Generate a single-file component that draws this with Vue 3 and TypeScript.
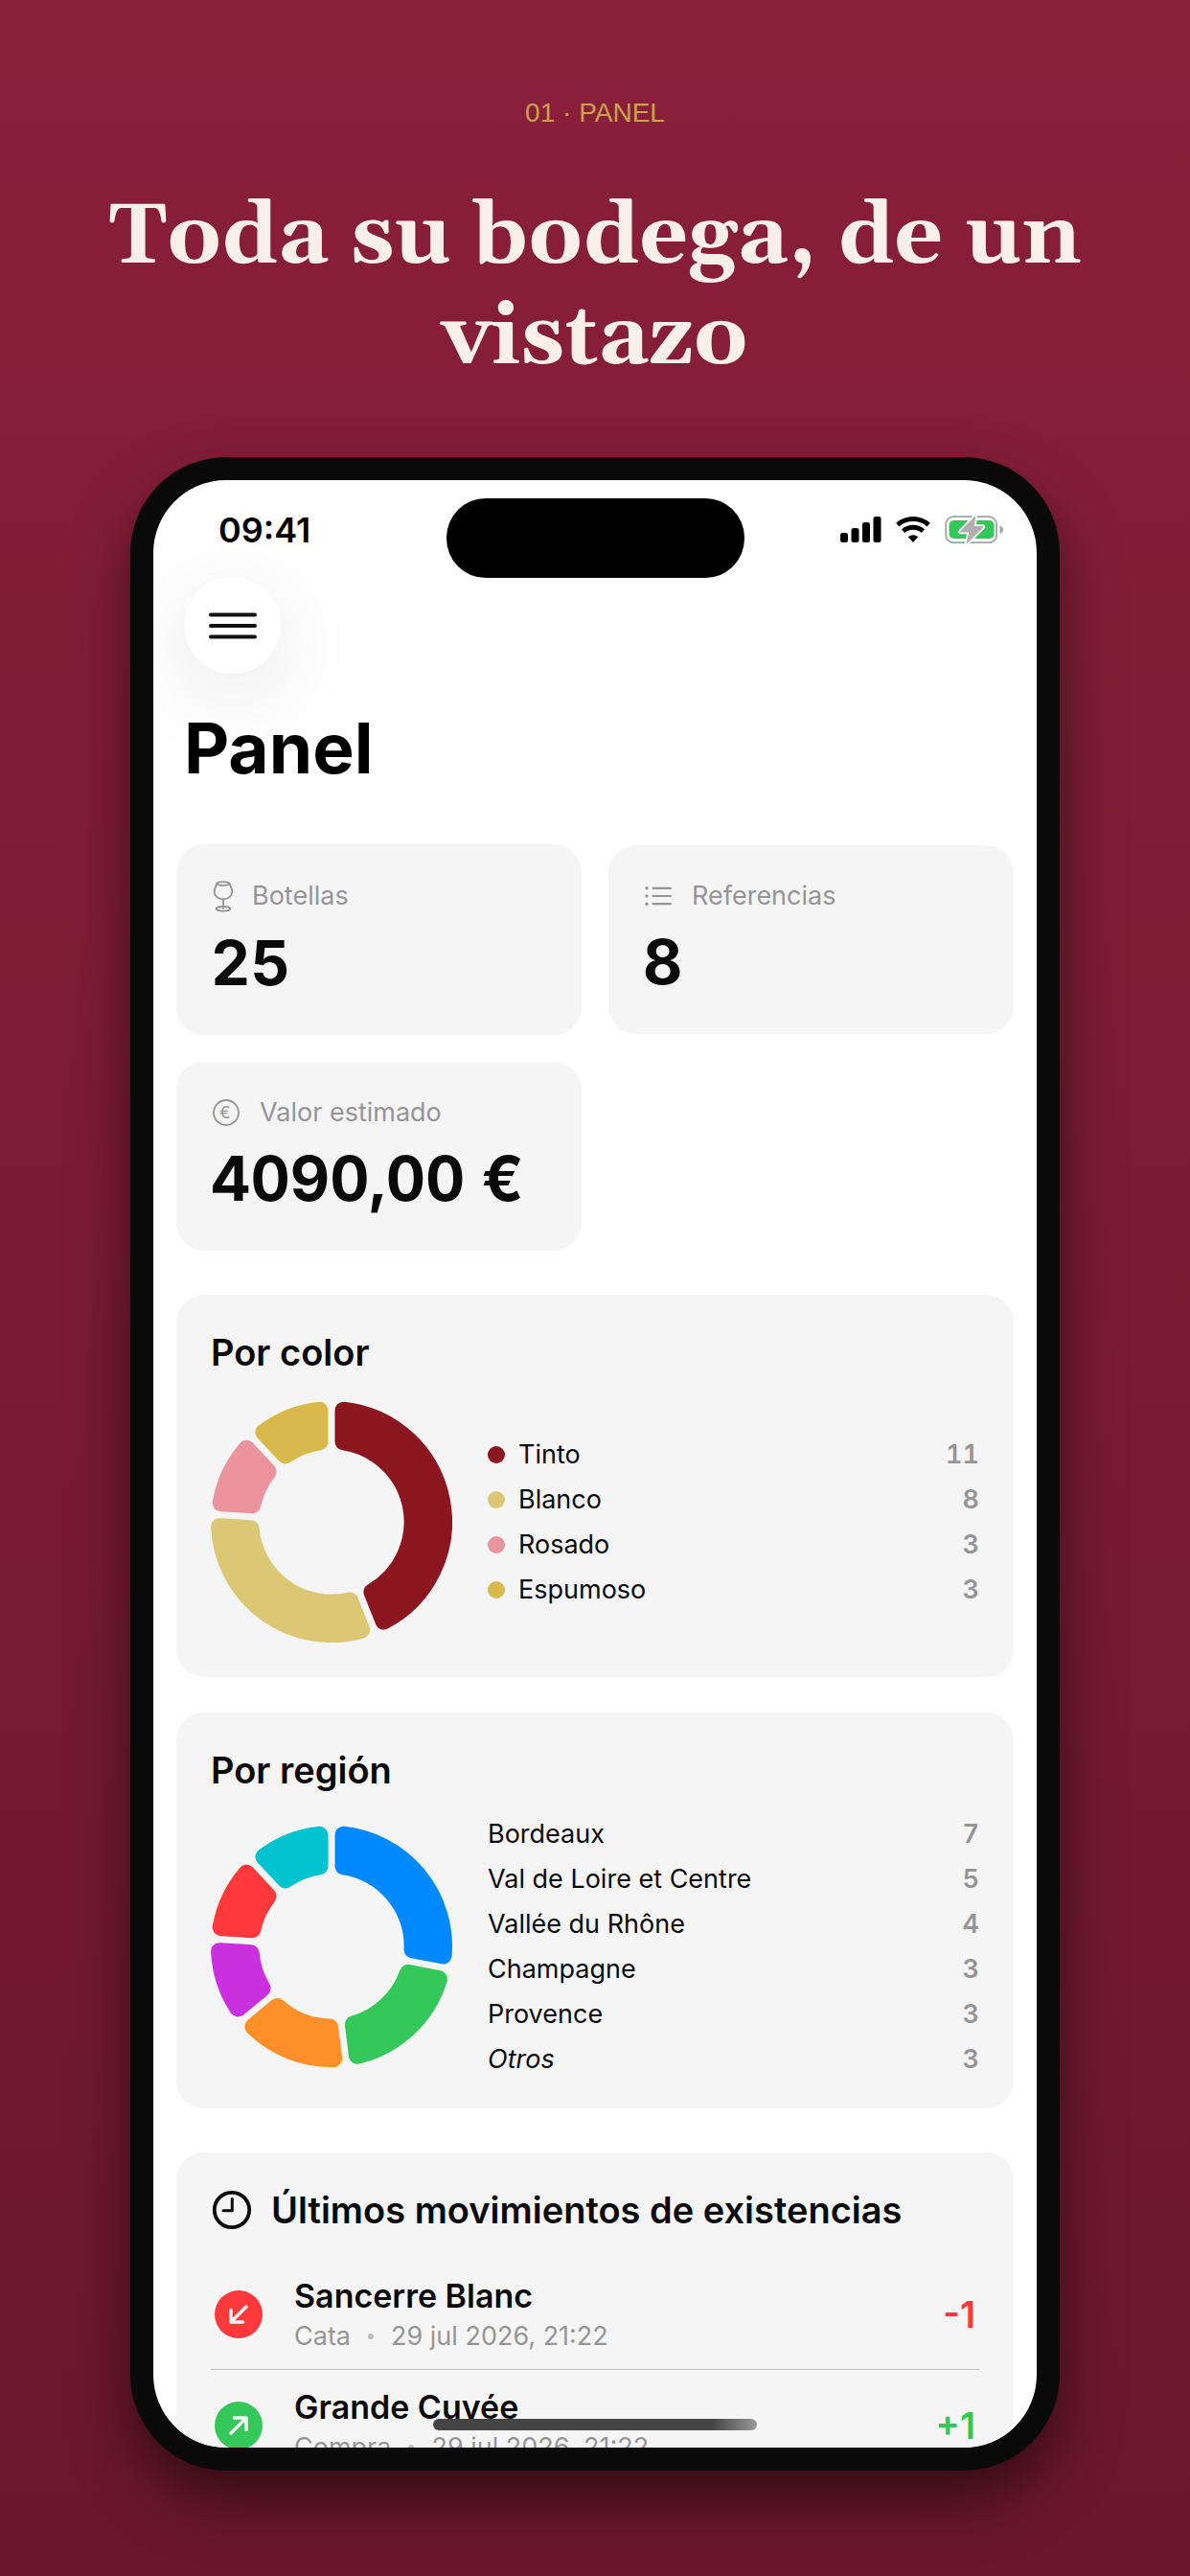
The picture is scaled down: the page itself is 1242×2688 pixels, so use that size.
<script setup lang="ts">
interface Slice {
  label: string
  count: number
  color: string
  other?: boolean
}

interface Movement {
  wine: string
  kind: string
  date: string
  delta: number
}

const colors: Slice[] = [
  { label: 'Tinto', count: 11, color: '#8c1620' },
  { label: 'Blanco', count: 8, color: '#dbc774' },
  { label: 'Rosado', count: 3, color: '#ec949e' },
  { label: 'Espumoso', count: 3, color: '#d9b84c' },
]

const regions: Slice[] = [
  { label: 'Bordeaux', count: 7, color: '#0088ff' },
  { label: 'Val de Loire et Centre', count: 5, color: '#34c759' },
  { label: 'Vallée du Rhône', count: 4, color: '#ff8f28' },
  { label: 'Champagne', count: 3, color: '#cb30e0' },
  { label: 'Provence', count: 3, color: '#ff383c' },
  { label: 'Otros', count: 3, color: '#00c3d0', other: true },
]

const movements: Movement[] = [
  { wine: 'Sancerre Blanc', kind: 'Cata', date: '29 jul 2026, 21:22', delta: -1 },
  { wine: 'Grande Cuvée', kind: 'Compra', date: '29 jul 2026, 21:22', delta: 1 },
]

const OUTER = 126
const INNER = 75.6
const GAP = 7
const CORNER = 9

// Each slice is inset by the corner radius; a round-joined stroke of the same
// colour brings it back to full size with rounded corners.
function arcs(slices: Slice[]) {
  const total = slices.reduce((sum, s) => sum + s.count, 0)
  const out = OUTER - CORNER
  const inn = INNER + CORNER
  const edge = GAP / 2 + CORNER
  const point = (r: number, a: number) =>
    `${(OUTER + r * Math.sin(a)).toFixed(2)} ${(OUTER - r * Math.cos(a)).toFixed(2)}`
  let sum = 0
  return slices.map((s) => {
    const a = (sum / total) * Math.PI * 2
    sum += s.count
    const b = (sum / total) * Math.PI * 2
    const dOut = Math.asin(edge / out)
    const dIn = Math.asin(edge / inn)
    return {
      color: s.color,
      d:
        `M${point(out, a + dOut)} A${out} ${out} 0 0 1 ${point(out, b - dOut)} ` +
        `L${point(inn, b - dIn)} A${inn} ${inn} 0 0 0 ${point(inn, a + dIn)} Z`,
    }
  })
}

const charts = [
  { title: 'Por color', slices: colors, arcs: arcs(colors), dots: true },
  { title: 'Por región', slices: regions, arcs: arcs(regions), dots: false },
]

const signed = (n: number) => (n > 0 ? `+${n}` : `${n}`)
</script>

<template>
  <main class="page">
    <p class="eyebrow">01 · PANEL</p>
    <h1 class="headline">Toda su bodega, de un vistazo</h1>

    <div class="phone">
      <div class="screen">
        <header class="status">
          <time class="clock">09:41</time>
          <div class="signals">
            <svg width="43" height="28" viewBox="0 0 43 28" aria-label="Cobertura">
              <rect x="0" y="17" width="8" height="10" rx="2.5" />
              <rect x="11.5" y="12" width="8" height="15" rx="2.5" />
              <rect x="23" y="6" width="8" height="21" rx="2.5" />
              <rect x="34.5" y="0" width="8" height="27" rx="2.5" />
            </svg>
            <svg width="36" height="28" viewBox="0 0 36 28" aria-label="Wi-Fi">
              <path d="M1.8 8.65A24.5 24.5 0 0 1 34.2 8.65" fill="none" stroke="#000" stroke-width="5" />
              <path d="M7.6 15.25A15.7 15.7 0 0 1 28.4 15.25" fill="none" stroke="#000" stroke-width="5" />
              <path d="M18 27L12.8 21.2A8 8 0 0 1 23.2 21.2Z" />
            </svg>
            <svg width="62" height="30" viewBox="0 0 62 30" aria-label="Batería">
              <rect x="1.2" y="1.2" width="53" height="27" rx="8" fill="none" stroke="#a3a3a3" stroke-width="1.8" />
              <rect x="4.6" y="5" width="47" height="19" rx="5" fill="#34c759" />
              <path d="M57.5 10.5C60 11.5 61 13 61 14.8S60 18 57.5 19Z" fill="#a3a3a3" />
              <path
                d="M31.5 1.5L16.8 16.8H26.3L23.5 28L39.8 11.8H30Z"
                fill="#fff" stroke="#fff" stroke-width="5" stroke-linejoin="round"
              />
              <path
                d="M31.5 1.5L16.8 16.8H26.3L23.5 28L39.8 11.8H30Z"
                fill="#b0b0b0" stroke="#b0b0b0" stroke-width="1.5" stroke-linejoin="round"
              />
            </svg>
          </div>
        </header>
        <div class="island"></div>

        <button class="menu" type="button" aria-label="Menú">
          <svg width="52" height="32" viewBox="0 0 52 32">
            <path d="M3 4.5H49M3 16H49M3 27.5H49" stroke="#111" stroke-width="4" stroke-linecap="round" />
          </svg>
        </button>
        <h2 class="title">Panel</h2>

        <div class="content">
          <div class="stats">
            <section class="card">
              <h3 class="stat-label">
                <svg width="24" height="36" viewBox="0 0 24 36" class="line-icon">
                  <ellipse cx="13" cy="5" rx="6.5" ry="1.8" />
                  <path d="M6.5 5C5 8 3.7 11 3.7 13.5C3.7 18 8 21.3 13 21.3S22.3 18 22.3 13.5C22.3 11 21 8 19.5 5" />
                  <path d="M13 21.3V31" />
                  <ellipse cx="13" cy="31.3" rx="7.3" ry="2.3" />
                </svg>
                Botellas
              </h3>
              <p class="stat-value">25</p>
            </section>
            <section class="card">
              <h3 class="stat-label">
                <svg width="32" height="32" viewBox="0 0 32 32" class="line-icon">
                  <path d="M10.5 7.8H29M10.5 16H29M10.5 24.2H29" stroke-width="2.2" />
                  <path d="M4 7.8H4.01M4 16H4.01M4 24.2H4.01" stroke-width="3.4" />
                </svg>
                Referencias
              </h3>
              <p class="stat-value">8</p>
            </section>
            <section class="card">
              <h3 class="stat-label">
                <svg width="32" height="32" viewBox="0 0 32 32" class="line-icon">
                  <circle cx="16" cy="16" r="13" />
                  <text x="15" y="22" text-anchor="middle" class="coin">€</text>
                </svg>
                Valor estimado
              </h3>
              <p class="stat-value">4090,00 €</p>
            </section>
          </div>

          <div class="charts">
            <section v-for="chart in charts" :key="chart.title" class="card">
              <h3 class="card-title">{{ chart.title }}</h3>
              <div class="chart">
                <svg width="252" height="252" viewBox="0 0 252 252" class="donut" :aria-label="chart.title">
                  <path
                    v-for="arc in chart.arcs" :key="arc.color" :d="arc.d"
                    :fill="arc.color" :stroke="arc.color" stroke-width="18" stroke-linejoin="round"
                  />
                </svg>
                <ul class="legend">
                  <li v-for="slice in chart.slices" :key="slice.label">
                    <span v-if="chart.dots" class="dot" :style="{ background: slice.color }"></span>
                    <span :class="['name', { other: slice.other }]">{{ slice.label }}</span>
                    <span class="count">{{ slice.count }}</span>
                  </li>
                </ul>
              </div>
            </section>
          </div>

          <section class="card">
            <h3 class="card-title with-icon">
              <svg width="44" height="44" viewBox="0 0 44 44">
                <circle cx="22" cy="22" r="18.2" fill="none" stroke="#0a0a0a" stroke-width="3.8" />
                <path d="M22.3 10.5V22.8H13" fill="none" stroke="#0a0a0a" stroke-width="3" stroke-linecap="round" stroke-linejoin="round" />
              </svg>
              Últimos movimientos de existencias
            </h3>
            <ul class="movements">
              <li v-for="move in movements" :key="move.wine" :class="move.delta > 0 ? 'in' : 'out'">
                <svg width="50" height="50" viewBox="0 0 50 50">
                  <circle cx="25" cy="25" r="25" fill="currentColor" />
                  <path
                    :d="move.delta > 0 ? 'M17 33L33 17M20.5 17H33V29.5' : 'M33 17L17 33M17 20.5V33H29.5'"
                    fill="none" stroke="#f5f5f5" stroke-width="3.5" stroke-linecap="round" stroke-linejoin="round"
                  />
                </svg>
                <div class="details">
                  <p class="wine">{{ move.wine }}</p>
                  <p class="meta">{{ move.kind }}<span class="bullet"></span>{{ move.date }}</p>
                </div>
                <span class="delta">{{ signed(move.delta) }}</span>
              </li>
            </ul>
          </section>
        </div>
        <div class="home-bar"></div>
      </div>
    </div>
  </main>
</template>

<style>
body {
  margin: 0;
  background: #6a172b;
}
</style>

<style scoped>
.page {
  box-sizing: border-box;
  min-height: 100vh;
  padding: 100px 80px 110px;
  background: linear-gradient(#8a1f3a, #6a172b);
  font-family: Inter, "Liberation Sans", sans-serif;
  color: #0a0a0a;
}
h1, h2, h3, p, ul {
  margin: 0;
  padding: 0;
}
ul {
  list-style: none;
}
svg {
  display: block;
  flex: none;
}
.eyebrow {
  font: 28px/36px "Liberation Sans", sans-serif;
  color: #c9a24b;
  text-align: center;
}
.headline {
  margin: 59px -20px 72px;
  font: bold 89px/105px Georgia, Gelasio, "Liberation Serif", serif;
  color: #f8efe9;
  text-align: center;
}
.phone {
  display: flex;
  box-sizing: border-box;
  aspect-ratio: 970 / 2101;
  min-height: 0;
  margin: 0 56px;
  padding: 24px;
  border-radius: 100px;
  background: #0a0a0a;
  box-shadow: 0 30px 60px rgba(0, 0, 0, 0.5);
  overflow: hidden;
}
.screen {
  position: relative;
  flex: 1;
  min-width: 0;
  border-radius: 76px;
  background: #fff;
  overflow: hidden;
}
.status {
  display: flex;
  align-items: center;
  justify-content: space-between;
  box-sizing: border-box;
  height: 101px;
  padding: 3px 34px 0 68px;
}
.clock {
  font-size: 36px;
  font-weight: 600;
  line-height: 44px;
  color: #000;
}
.signals {
  display: flex;
  align-items: center;
  gap: 15px;
}
.island {
  position: absolute;
  top: 19px;
  left: 50%;
  width: 311px;
  height: 83px;
  margin-left: -155px;
  border-radius: 41px;
  background: #000;
}
.menu {
  display: flex;
  align-items: center;
  justify-content: center;
  width: 101px;
  height: 101px;
  margin-left: 32px;
  padding: 0;
  border: 0;
  border-radius: 50%;
  background: #fff;
  box-shadow: 0 20px 90px rgba(0, 0, 0, 0.1);
}
.title {
  margin: 33px 32px 55px;
  font-size: 73px;
  font-weight: 700;
  line-height: 90px;
  color: #000;
}
.content {
  display: flex;
  flex-direction: column;
  gap: 46px;
  padding: 0 24px;
}
.stats {
  display: grid;
  grid-template-columns: 1fr 1fr;
  gap: 28px;
  align-items: center;
}
.charts {
  display: flex;
  flex-direction: column;
  gap: 37px;
}
.card {
  padding: 36px;
  border-radius: 29px;
  background: #f5f5f5;
}
.stat-label {
  display: flex;
  align-items: center;
  gap: 19px;
  margin-bottom: 13px;
  font-size: 27px;
  font-weight: 400;
  line-height: 34px;
  color: #959595;
}
.line-icon {
  fill: none;
  stroke: #959595;
  stroke-width: 1.8;
  stroke-linecap: round;
}
.coin {
  fill: #959595;
  stroke: none;
  font-size: 17px;
}
.stat-value {
  font-size: 64px;
  font-weight: 700;
  font-variant-numeric: tabular-nums;
  line-height: 78px;
}
.card-title {
  font-size: 38px;
  font-weight: 600;
  line-height: 48px;
}
.with-icon {
  display: flex;
  align-items: center;
  gap: 19px;
}
.chart {
  display: flex;
  align-items: center;
  gap: 37px;
  margin-top: 27px;
}
.legend {
  display: flex;
  flex: 1;
  flex-direction: column;
  gap: 16px;
}
.legend li {
  display: flex;
  align-items: center;
  gap: 14px;
  font-size: 27px;
  line-height: 31px;
}
.dot {
  width: 18px;
  height: 18px;
  border-radius: 50%;
}
.name {
  flex: 1;
}
.other {
  font-style: italic;
}
.count {
  font-weight: 600;
  font-variant-numeric: tabular-nums;
  color: #959595;
}
.movements {
  margin-top: 27px;
}
.movements li {
  display: flex;
  align-items: center;
  gap: 33px;
  padding: 18px 4px 17px;
  border-bottom: 1px solid #bfbfbf;
}
.in {
  color: #34c759;
}
.out {
  color: #ff383c;
}
.details {
  flex: 1;
}
.wine {
  margin-bottom: 4px;
  font-size: 34px;
  font-weight: 600;
  line-height: 42px;
  color: #0a0a0a;
}
.meta {
  display: flex;
  align-items: center;
  gap: 18px;
  font-size: 27px;
  line-height: 34px;
  color: #959595;
}
.bullet {
  width: 6px;
  height: 6px;
  border-radius: 50%;
  background: #bdbdbd;
}
.delta {
  font-size: 38px;
  font-weight: 600;
  line-height: 48px;
}
.home-bar {
  position: absolute;
  bottom: 18px;
  left: 50%;
  width: 338px;
  height: 12px;
  margin-left: -169px;
  border-radius: 6px;
  background: linear-gradient(90deg, #444 86%, #999);
}
</style>
